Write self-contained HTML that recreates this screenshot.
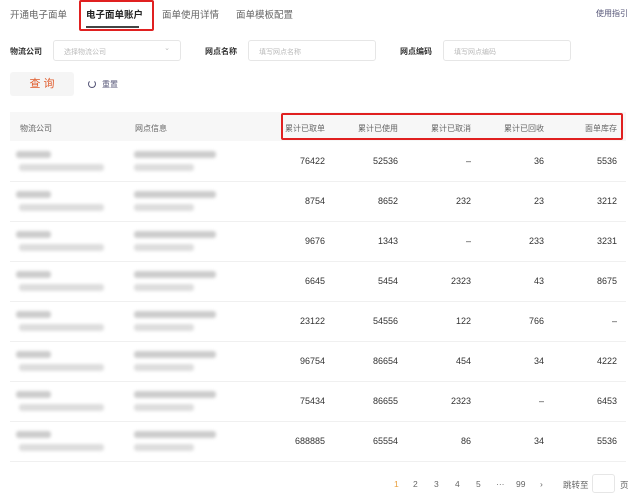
<!DOCTYPE html>
<html><head><meta charset="utf-8"><style>
*{margin:0;padding:0;box-sizing:border-box}
body{width:636px;height:500px;background:#fff;font-family:"Liberation Sans","Noto Sans CJK SC",sans-serif;position:relative;overflow:hidden;color:#333}
.a{position:absolute;white-space:nowrap}
.tab{font-size:9.5px;color:#666;top:7px}
.lbl{font-size:8px;color:#333;font-weight:bold;top:46px}
.inp{position:absolute;top:40px;height:21px;border:1px solid #e6e6e6;border-radius:3px;font-size:7px;color:#bbb;padding:6px 0 0 10px}
.hd{font-size:8px;color:#666;top:123px}
.num{font-size:9px;color:#333;width:70px;text-align:right}
.line{position:absolute;left:10px;width:616px;height:1px;background:#f0f0f0}
.b{position:absolute;background:#ccc;filter:blur(1.5px);border-radius:3px}
.pg{font-size:8.5px;color:#666;top:479px}
</style></head><body>
<div class="a tab" style="left:10px">开通电子面单</div>
<div class="a tab" style="left:86px;color:#222;font-weight:bold">电子面单账户</div>
<div class="a" style="left:86px;top:26px;width:53px;height:2px;background:#444"></div>
<div class="a" style="left:79px;top:0;width:75px;height:31px;border:2px solid #e02020;border-radius:2px"></div>
<div class="a tab" style="left:162px">面单使用详情</div>
<div class="a tab" style="left:236px">面单模板配置</div>
<div class="a" style="left:596px;top:8px;font-size:8px;color:#557">使用指引</div>

<div class="a lbl" style="left:10px">物流公司</div>
<div class="inp" style="left:53px;width:128px">选择物流公司<span style="position:absolute;right:10px;top:3px;color:#bbb">⌄</span></div>
<div class="a lbl" style="left:205px">网点名称</div>
<div class="inp" style="left:248px;width:128px">填写网点名称</div>
<div class="a lbl" style="left:400px">网点编码</div>
<div class="inp" style="left:443px;width:128px">填写网点编码</div>

<div class="a" style="left:10px;top:72px;width:64px;height:24px;background:#f5f5f5;border-radius:3px;color:#e05a2a;font-size:11px;text-align:center;line-height:24px">查 询</div>
<div class="a" style="left:88px;top:80px;width:8px;height:8px;border:1px solid #557;border-radius:50%;border-top-color:transparent"></div>
<div class="a" style="left:102px;top:79px;font-size:8px;color:#557">重置</div>

<div class="a" style="left:10px;top:112px;width:616px;height:29px;background:#f7f7f7"></div>
<div class="a hd" style="left:20px">物流公司</div>
<div class="a hd" style="left:135px">网点信息</div>
<div class="a hd num" style="left:255px;color:#666;font-size:8px">累计已取单</div>
<div class="a hd num" style="left:328px;color:#666;font-size:8px">累计已使用</div>
<div class="a hd num" style="left:401px;color:#666;font-size:8px">累计已取消</div>
<div class="a hd num" style="left:474px;color:#666;font-size:8px">累计已回收</div>
<div class="a hd num" style="left:547px;color:#666;font-size:8px">面单库存</div>
<div class="a" style="left:281px;top:113px;width:342px;height:27px;border:2px solid #e02020;border-radius:2px"></div>

<div id="rows"></div>
<script>
var d=[["76422","52536","–","36","5536"],["8754","8652","232","23","3212"],["9676","1343","–","233","3231"],["6645","5454","2323","43","8675"],["23122","54556","122","766","–"],["96754","86654","454","34","4222"],["75434","86655","2323","–","6453"],["688885","65554","86","34","5536"]];
var h="";
d.forEach(function(r,i){var y=141+i*40;
h+='<div class="line" style="top:'+(y+40)+'px"></div>';
h+='<div class="b" style="left:16px;top:'+(y+10)+'px;width:35px;height:7px"></div>';
h+='<div class="b" style="left:19px;top:'+(y+23)+'px;width:85px;height:7px;background:#ddd"></div>';
h+='<div class="b" style="left:134px;top:'+(y+10)+'px;width:82px;height:7px"></div>';
h+='<div class="b" style="left:134px;top:'+(y+23)+'px;width:60px;height:7px;background:#ddd"></div>';
for(var j=0;j<5;j++)h+='<div class="a num" style="left:'+(255+73*j)+'px;top:'+(y+15)+'px">'+r[j]+'</div>';
});
document.getElementById("rows").innerHTML=h;
</script>

<div class="a pg" style="left:394px;color:#e8a040">1</div>
<div class="a pg" style="left:413px">2</div>
<div class="a pg" style="left:434px">3</div>
<div class="a pg" style="left:455px">4</div>
<div class="a pg" style="left:476px">5</div>
<div class="a pg" style="left:496px">···</div>
<div class="a pg" style="left:516px">99</div>
<div class="a pg" style="left:540px">›</div>
<div class="a pg" style="left:563px">跳转至</div>
<div class="a" style="left:592px;top:474px;width:23px;height:19px;border:1px solid #e6e6e6;border-radius:3px"></div>
<div class="a pg" style="left:620px">页</div>
</body></html>
